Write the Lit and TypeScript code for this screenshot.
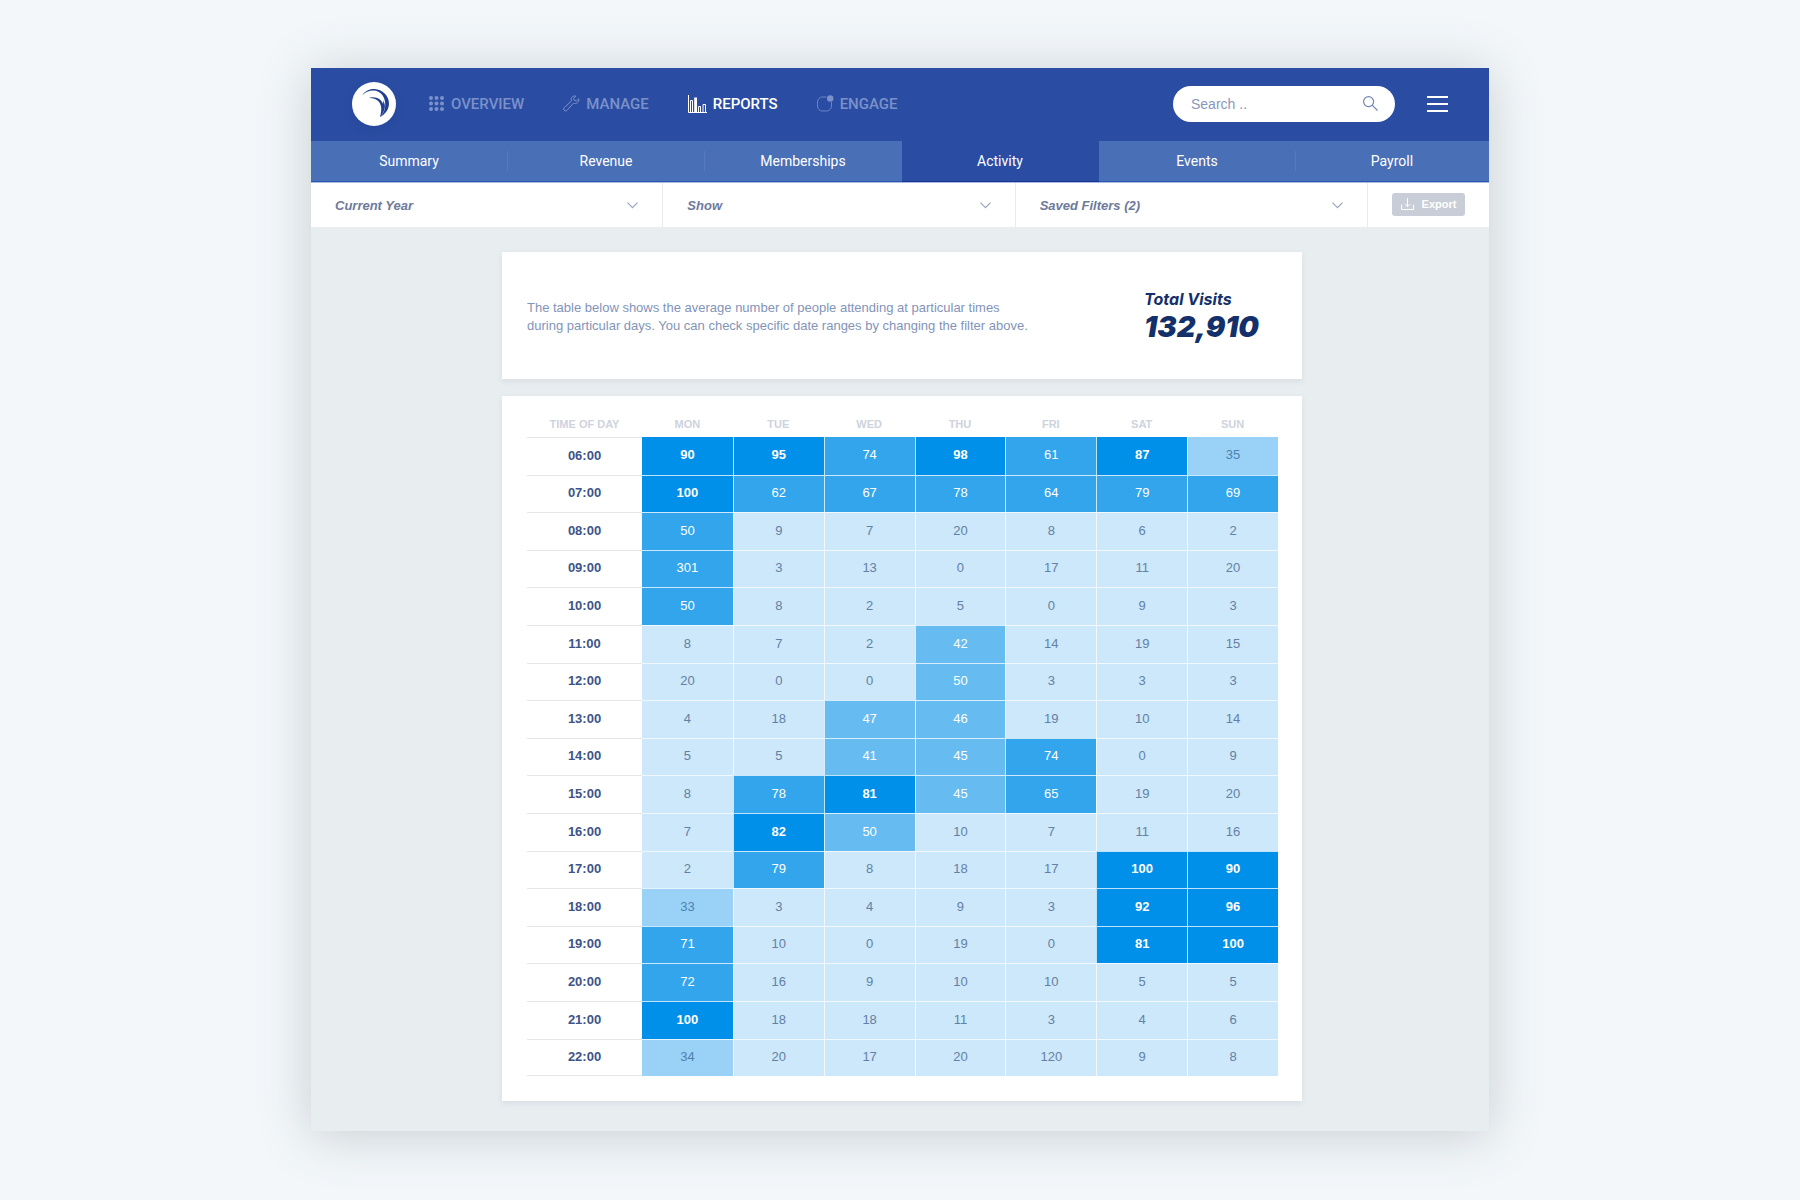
import { LitElement, html, css, svg } from 'lit';
import { customElement, state } from 'lit/decorators.js';
import { classMap } from 'lit/directives/class-map.js';

type Level = 'low' | 'mild' | 'warm' | 'high' | 'peak';

const LEVELS: Record<string, Level> = { l: 'low', m: 'mild', w: 'warm', h: 'high', p: 'peak' };

const DAYS = ['MON', 'TUE', 'WED', 'THU', 'FRI', 'SAT', 'SUN'];

// One entry per hour: average visits by day, and the heat level of each cell.
const HOURS: Array<[string, number[], string]> = [
  ['06:00', [90, 95, 74, 98, 61, 87, 35], 'pphphpm'],
  ['07:00', [100, 62, 67, 78, 64, 79, 69], 'phhhhhh'],
  ['08:00', [50, 9, 7, 20, 8, 6, 2], 'hllllll'],
  ['09:00', [301, 3, 13, 0, 17, 11, 20], 'hllllll'],
  ['10:00', [50, 8, 2, 5, 0, 9, 3], 'hllllll'],
  ['11:00', [8, 7, 2, 42, 14, 19, 15], 'lllwlll'],
  ['12:00', [20, 0, 0, 50, 3, 3, 3], 'lllwlll'],
  ['13:00', [4, 18, 47, 46, 19, 10, 14], 'llwwlll'],
  ['14:00', [5, 5, 41, 45, 74, 0, 9], 'llwwhll'],
  ['15:00', [8, 78, 81, 45, 65, 19, 20], 'lhpwhll'],
  ['16:00', [7, 82, 50, 10, 7, 11, 16], 'lpwllll'],
  ['17:00', [2, 79, 8, 18, 17, 100, 90], 'lhlllpp'],
  ['18:00', [33, 3, 4, 9, 3, 92, 96], 'mllllpp'],
  ['19:00', [71, 10, 0, 19, 0, 81, 100], 'hllllpp'],
  ['20:00', [72, 16, 9, 10, 10, 5, 5], 'hllllll'],
  ['21:00', [100, 18, 18, 11, 3, 4, 6], 'pllllll'],
  ['22:00', [34, 20, 17, 20, 120, 9, 8], 'mllllll'],
];

const icons = {
  overview: svg`<svg width="16" height="16" viewBox="0 0 16 16" fill="currentColor" aria-hidden="true">
    ${[2, 7.5, 13].map((y) => [2, 7.5, 13].map((x) => svg`<circle cx=${x} cy=${y} r="2"/>`))}</svg>`,
  manage: svg`<svg width="17" height="17" viewBox="0 0 17 17" fill="none" stroke="currentColor" stroke-width="1" stroke-linejoin="round" aria-hidden="true">
    <path d="M12.9 1.1C10.6.3 8.2 2 8.1 4.4c0 .6.1 1.2.3 1.7L1.2 12.7a1.9 1.9 0 0 0 0 2.7 1.9 1.9 0 0 0 2.7 0l6.6-7.2c3 1.2 6.1-1.2 5.3-4.5l-2.3 2.2-2.2-.5-.6-2.1z"/></svg>`,
  reports: svg`<svg width="19" height="18" viewBox="0 0 19 18" fill="none" stroke="currentColor" stroke-width="1" aria-hidden="true">
    <path d="M.5 0v17.5H19M2.5 17V5.500h2V17M10.500 17v-5.500h2V17M15 17V9.500h2.500V17"/><path d="M6.200 2.500h2.800V17H6.200z" fill="currentColor" stroke="none"/></svg>`,
  engage: svg`<svg width="17" height="17" viewBox="0 0 17 17" fill="none" stroke="currentColor" stroke-width="1" aria-hidden="true">
    <path d="M9.500 2H5.500a5 5 0 0 0-5 5v4a5 5 0 0 0 5 5h4a5 5 0 0 0 5-5V7" opacity=".8"/><circle cx="13.200" cy="3.500" r="3.200" fill="currentColor" stroke="none"/></svg>`,
};

const NAV: Array<{ label: string; icon: unknown }> = [
  { label: 'OVERVIEW', icon: icons.overview },
  { label: 'MANAGE', icon: icons.manage },
  { label: 'REPORTS', icon: icons.reports },
  { label: 'ENGAGE', icon: icons.engage },
];

const TABS = ['Summary', 'Revenue', 'Memberships', 'Activity', 'Events', 'Payroll'];
const FILTERS = ['Current Year', 'Show', 'Saved Filters (2)'];

@customElement('app-topbar')
class AppTopbar extends LitElement {
  static styles = css`
    :host { display: block; background: #2a4da3; }
    .bar { display: flex; align-items: center; height: 73px; padding: 0 41px 2px; box-sizing: border-box; }
    .logo { display: block; width: 44px; height: 44px; margin-right: 33px; border-radius: 50%; box-shadow: 0 3px 8px rgba(20, 40, 100, 0.15); }
    .logo svg { display: block; }
    nav { display: flex; gap: 39px; }
    .item { display: flex; align-items: center; gap: 6px; height: 24px; font: 500 15px/24px Roboto, sans-serif; color: #7b91ca; text-decoration: none; }
    .item svg { display: block; flex: none; }
    .current { color: #fff; }
    .search { display: flex; align-items: center; width: 222px; height: 36px; margin-left: auto; padding: 0 17px 0 18px; box-sizing: border-box; border-radius: 18px; background: #fff; color: #7286b4; }
    .search input { flex: 1; min-width: 0; border: 0; padding: 0; outline: 0; background: none; font: 14px/20px "Liberation Sans", sans-serif; color: #5d74a8; }
    .search input::placeholder { color: #8798c0; opacity: 1; }
    .menu { margin-left: 32px; padding: 0; border: 0; background: none; color: #fff; cursor: pointer; }
    .menu svg { display: block; }
  `;
  @state() private current = 'REPORTS';

  render() {
    return html`<header class="bar">
      <a class="logo" href="#home" aria-label="Home">
        <svg width="44" height="44" viewBox="0 0 45 45" aria-hidden="true">
          <circle cx="22.500" cy="22.500" r="22.500" fill="#fff"/>
          <path fill="#1f3f92" d="M10.500 13.500C14 8.500 19 7 23 7.200 31 7.600 37.800 14 37.800 22c0 6-3.800 11-9.300 14 3.500-4 5.500-7 5.500-12C34.500 15 29 8.800 22 8.600c-4.500-.1-8.500 1.600-11.500 4.900z"/>
          <path fill="#1f3f92" d="M16.500 16.500c3.500-1.300 8.500-1.300 12 1.500 1.500 1.300 2.700 3 3.300 4.500l.1-3.500c1.100 2 1.800 4 1.800 6 0 4-2.700 8-5.200 11 2.500-8 1.600-13-1.500-16.300-2.700-2.700-6.500-3.500-10.500-3.200z"/>
        </svg>
      </a>
      <nav aria-label="Main">
        ${NAV.map(({ label, icon }) => html`<a
          class=${classMap({ item: true, current: label === this.current })}
          href="#${label.toLowerCase()}"
          @click=${() => (this.current = label)}>${icon}<span>${label}</span></a>`)}
      </nav>
      <label class="search">
        <input type="search" placeholder="Search .." aria-label="Search" />
        <svg width="15" height="15" viewBox="0 0 15 15" fill="none" stroke="currentColor" stroke-width="1.200" aria-hidden="true"><circle cx="5.600" cy="5.600" r="5"/><path d="M9.200 9.200l5.300 5.300"/></svg>
      </label>
      <button class="menu" aria-label="Menu"><svg width="21" height="16" viewBox="0 0 21 16" fill="currentColor" aria-hidden="true"><path d="M0 0h21v2H0zM0 7h21v2H0zM0 14h21v2H0z"/></svg></button>
    </header>`;
  }
}

@customElement('app-tabs')
class AppTabs extends LitElement {
  static styles = css`
    :host { display: block; }
    .tabs { display: grid; grid-template-columns: repeat(5, 197fr) 193fr; background: #496fb6; }
    .tab { display: flex; align-items: center; height: 41px; box-sizing: border-box; border-bottom: 1px solid #2a55b0; font: 14px/20px Roboto, sans-serif; color: #fff; text-decoration: none; }
    .tab span { flex: 1; text-align: center; border-right: 1px solid #567abf; }
    .tab:last-child span, .active span, .before-active span { border-right-color: transparent; }
    .active { background: #2a4da3; border-bottom-color: #163494; }
  `;
  @state() private active = 'Activity';

  render() {
    const index = TABS.indexOf(this.active);
    return html`<nav class="tabs" aria-label="Reports">
      ${TABS.map((label, i) => html`<a
        class=${classMap({ tab: true, active: i === index, 'before-active': i === index - 1 })}
        href="#${label.toLowerCase()}"
        @click=${() => (this.active = label)}><span>${label}</span></a>`)}
    </nav>`;
  }
}

@customElement('app-filters')
class AppFilters extends LitElement {
  static styles = css`
    :host { display: block; background: #fff; border-top: 1px solid #a9bbe0; }
    .filters { display: flex; height: 44px; }
    .filter { flex: 1; display: grid; align-items: center; border-right: 1px solid #e8ebee; }
    .filter select, .filter svg { grid-area: 1 / 1; }
    .filter select { appearance: none; width: 100%; height: 100%; margin: 0; padding: 2px 48px 0 24px; border: 0; border-radius: 0; background: none; font: italic 700 13px/20px "Liberation Sans", sans-serif; color: #6d7a9c; }
    .filter svg { justify-self: end; margin-right: 24px; pointer-events: none; color: #97a5c3; }
    .action { display: flex; align-items: center; padding: 0 24px; }
    .export { display: flex; align-items: center; justify-content: center; gap: 8px; width: 73px; height: 23px; margin-bottom: 2px; padding: 0; border: 0; border-radius: 3px; background: #c9cdd8; font: 700 11px/16px "Liberation Sans", sans-serif; color: #fff; cursor: pointer; }
  `;

  render() {
    return html`<div class="filters">
      ${FILTERS.map((label) => html`<label class="filter">
        <select aria-label=${label}><option>${label}</option></select>
        <svg width="11" height="7" viewBox="0 0 11 7" fill="none" stroke="currentColor" stroke-width="1.200" aria-hidden="true"><path d="M.5.700l5 5 5-5"/></svg>
      </label>`)}
      <div class="action"><button class="export">
        <svg width="13" height="12" viewBox="0 0 13 12" fill="none" stroke="currentColor" aria-hidden="true"><path d="M.5 6.500v5h12v-5M6.500 0v8.500M3.800 6l2.700 2.700L9.200 6"/></svg>Export</button></div>
    </div>`;
  }
}

@customElement('visit-heatmap')
class VisitHeatmap extends LitElement {
  static styles = css`
    :host { display: block; }
    table { width: 100%; table-layout: fixed; border-collapse: separate; border-spacing: 0; font: 13px/18px "Liberation Sans", sans-serif; text-align: center; }
    th, td { padding: 0 0 2px; box-sizing: border-box; }
    .corner { width: 115px; }
    thead th { height: 41px; padding-top: 16px; font-size: 11px; font-weight: 700; color: #ced3de; }
    tbody tr { height: 38px; }
    tbody tr:nth-child(5n + 2), tbody tr:nth-child(5n + 4) { height: 37px; }
    .hour { border-top: 1px solid #e4e7ea; font-weight: 700; color: #3d5489; }
    tr:last-child .hour { border-bottom: 1px solid #e4e7ea; }
    td { border: 0 solid rgba(255, 255, 255, 0.75); border-width: 1px 0 0 1px; color: #fff; }
    tr:first-child td { border-top-width: 0; }
    td:nth-child(2) { border-left-width: 0; }
    .low { background: #cce8fa; color: #6480a6; }
    .mild { background: #99d2f6; color: #5080af; }
    .warm { background: #66bbf1; }
    .high { background: #32a5ed; }
    .peak { background: #008fe9; font-weight: 700; }
  `;

  render() {
    return html`<table>
      <thead><tr><th class="corner" scope="col">TIME OF DAY</th>${DAYS.map((d) => html`<th scope="col">${d}</th>`)}</tr></thead>
      <tbody>${HOURS.map(([hour, values, levels]) => html`<tr>
        <th class="hour" scope="row">${hour}</th>
        ${values.map((v, i) => html`<td class=${LEVELS[levels[i]]}>${v}</td>`)}
      </tr>`)}</tbody>
    </table>`;
  }
}

@customElement('app-root')
class AppRoot extends LitElement {
  static styles = css`
    :host { display: block; min-height: 100vh; box-sizing: border-box; padding: 68px 24px; background: #f3f7fa; }
    .window { max-width: 1178px; margin: 0 auto; background: #e8edf0; box-shadow: 0 4px 48px rgba(90, 100, 105, 0.28); }
    main { display: flex; flex-direction: column; align-items: center; gap: 17px; padding: 25px 0 30px 4px; }
    .card { width: 100%; max-width: 800px; box-sizing: border-box; background: #fff; box-shadow: 0 2px 6px rgba(60, 80, 100, 0.1); }
    .intro { display: flex; align-items: center; justify-content: space-between; gap: 24px; min-height: 127px; padding: 3px 43px 0 25px; }
    .intro p { max-width: 510px; margin: 0; font: 13px/18px "Liberation Sans", sans-serif; color: #8294ba; }
    .total { display: flex; flex-direction: column; padding-bottom: 4px; font: italic 700 16px/24px Inter, sans-serif; color: #13306a; }
    .total strong { font-size: 29px; line-height: 32px; }
    .report { padding: 0 24px 25px 25px; }
  `;

  render() {
    return html`<div class="window">
      <app-topbar></app-topbar>
      <app-tabs></app-tabs>
      <app-filters></app-filters>
      <main>
        <section class="card intro">
          <p>The table below shows the average number of people attending at particular times during particular days. You can check specific date ranges by changing the filter above.</p>
          <div class="total"><span>Total Visits</span><strong>132,910</strong></div>
        </section>
        <section class="card report"><visit-heatmap></visit-heatmap></section>
      </main>
    </div>`;
  }
}
